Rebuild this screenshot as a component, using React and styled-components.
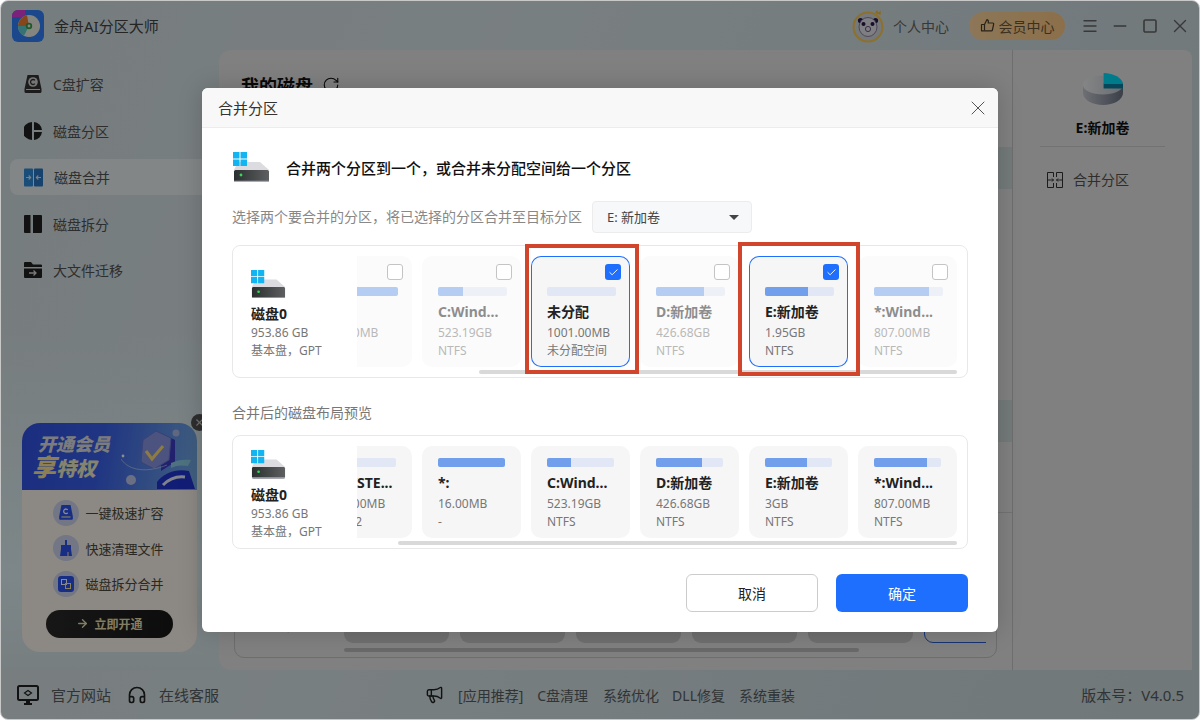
import React from 'react';
import styled, { createGlobalStyle } from 'styled-components';
import { X, Minus, Square, Menu, Megaphone, Headphones, RotateCw, Check, ArrowRight } from 'lucide-react';

const GlobalStyle = createGlobalStyle`
  html, body { margin: 0; padding: 0; background: #fff; overflow: hidden; }
  * { box-sizing: border-box; }
  body { font-family: "Noto Sans", "Noto Sans CJK SC", sans-serif; }
  svg { display: block; flex: none; }
`;

const Window = styled.div`
  position: relative;
  width: 1200px;
  height: 720px;
  display: flex;
  flex-direction: column;
  border-radius: 8px;
  overflow: hidden;
  border: 1px solid #c8c8c8;
  margin: 0;
  background: linear-gradient(110deg, #d8e3e7 0%, #dce8ec 35%, #ccdade 100%);
  color: #555;
`;
const TitleBar = styled.header`
  height: 49px;
  flex: none;
  display: flex;
  align-items: center;
  padding: 0 10px 0 11px;
`;
const AppName = styled.div`
  margin-left: 10px;
  font-size: 15px;
  color: #444;
`;
const TitleRight = styled.div`
  margin-left: auto;
  display: flex;
  align-items: center;
`;
const UserName = styled.span`
  font-size: 14px;
  margin: 0 20px 0 7px;
  color: #666;
`;
const VipPill = styled.div`
  width: 96px;
  height: 28px;
  border-radius: 14px;
  background: linear-gradient(90deg, #ffd9a0, #ffcb88);
  display: flex;
  align-items: center;
  justify-content: center;
  gap: 4px;
  font-size: 14px;
  color: #6e5a3c;
`;
const WinButtons = styled.div`
  display: flex;
  align-items: center;
  gap: 12px;
  margin-left: 16px;
  color: #666;
`;
const WinButton = styled.div`
  width: 18px;
  height: 18px;
  display: flex;
  align-items: center;
  justify-content: center;
`;
const Body = styled.div`
  flex: 1;
  display: flex;
  min-height: 0;
`;
const Sidebar = styled.aside`
  width: 218px;
  flex: none;
  display: flex;
  flex-direction: column;
  padding: 16px 0 18px 9px;
  background: linear-gradient(180deg, transparent 45%, #e3f5f8 85%, #d8e6ea 100%);
`;
const NavItem = styled.div`
  height: 36px;
  margin-bottom: 10.5px;
  border-radius: 8px 0 0 8px;
  display: flex;
  align-items: center;
  gap: 11px;
  padding-left: 14px;
  font-size: 14px;
  color: #555;
  background: ${p => (p.$active ? '#edf4f6' : 'transparent')};
`;
const Promo = styled.div`
  position: relative;
  margin: auto 0 0 12px;
  width: 175px;
  height: 229px;
`;
const PromoClose = styled.div`
  position: absolute;
  top: -9px;
  right: -11px;
  width: 17px;
  height: 17px;
  border-radius: 50%;
  background: #555;
  color: #ccc;
  display: flex;
  align-items: center;
  justify-content: center;
`;
const PromoCard = styled.div`
  height: 100%;
  border-radius: 18px;
  overflow: hidden;
  background: #fff8ee;
`;
const Banner = styled.div`
  height: 67px;
  display: flex;
  align-items: center;
  justify-content: space-between;
  padding: 0 2px 0 10px;
  background: linear-gradient(100deg, #3152e8 0%, #3a62ee 45%, #78b0e8 100%);
`;
const BannerText = styled.div`
  font-style: italic;
  font-weight: 900;
  line-height: 1;
  color: #e2e2e2;
  font-size: 18px;
  white-space: nowrap;
`;
const BannerLine = styled.div`
  padding-left: 6px;
  margin-bottom: 2px;
`;
const BannerSub = styled.div`
  font-size: 20px;
  color: #f2f0c8;
`;
const Gold = styled.span`
  font-size: 24px;
  color: #ffe89a;
`;
const PromoList = styled.div`
  padding-top: 5px;
  display: flex;
  flex-direction: column;
  align-items: center;
`;
const PromoRow = styled.div`
  height: 35.5px;
  width: 114px;
  display: flex;
  align-items: center;
  gap: 7px;
  font-size: 13px;
  white-space: nowrap;
  color: #4c4a3c;
`;
const PromoIcon = styled.div`
  width: 26px;
  height: 26px;
  flex: none;
  border-radius: 50%;
  background: #cfd8f2;
  display: flex;
  align-items: center;
  justify-content: center;
`;
const OpenButton = styled.div`
  margin-top: 8px;
  width: 127px;
  height: 28px;
  border-radius: 14px;
  background: linear-gradient(90deg, #2a2a2a, #181818);
  color: #f0e3b4;
  font-size: 12px;
  font-weight: 700;
  display: flex;
  align-items: center;
  justify-content: center;
  gap: 5px;
`;
const Panel = styled.main`
  flex: 1;
  margin-right: 7px;
  display: flex;
  border-radius: 12px 8px 0 12px;
  background: #e9e9e9;
  overflow: hidden;
`;
const PanelLeft = styled.section`
  width: 793px;
  flex: none;
  display: flex;
  flex-direction: column;
  padding-top: 18px;
`;
const Heading = styled.h2`
  height: 34px;
  margin: 0 0 45px;
  padding-left: 22px;
  display: flex;
  align-items: center;
  gap: 9px;
  font-size: 18px;
  font-weight: 700;
  color: #111;
`;
const TableRow = styled.div`
  height: 42.2px;
  background: ${p => (p.$active ? '#d2dedf' : 'transparent')};
`;
const DiskSection = styled.div`
  margin-top: auto;
  border-top: 1px solid #d0d0d0;
  padding: 12px 15px;
`;
const BackBox = styled.div`
  height: 133px;
  border: 1px solid #c6c6c6;
  border-radius: 10px;
  display: flex;
  padding: 10px 10px 5px 0;
`;
const BackInfo = styled.div`
  width: 109px;
  flex: none;
  padding: 82px 0 0 15px;
  font-size: 12px;
  line-height: 18px;
  color: #444;
`;
const BackCol = styled.div`
  flex: 1;
  min-width: 0;
`;
const BackStrip = styled.div`
  display: flex;
  gap: 11px;
  overflow: hidden;
`;
const BackCard = styled.div`
  width: 105px;
  height: 107px;
  flex: none;
  border-radius: 9px;
  background: ${p => (p.$selected ? 'transparent' : '#cacaca')};
  border: ${p => (p.$selected ? '1px solid #2a5fd0' : 'none')};
`;
const BackThumb = styled.div`
  width: 515px;
  height: 4px;
  margin-top: 5px;
  border-radius: 2px;
  background: #c0c0c0;
`;
const PanelRight = styled.section`
  flex: 1;
  border-left: 1px solid #c9c9c9;
  display: flex;
  flex-direction: column;
  align-items: center;
  padding-top: 23px;
`;
const RightName = styled.div`
  margin-top: 12px;
  font-size: 14px;
  font-weight: 700;
  line-height: 22px;
  color: #111;
`;
const RightDivider = styled.div`
  width: 125px;
  height: 1px;
  margin-top: 7px;
  background: #d0d0d0;
`;
const RightAction = styled.div`
  width: 125px;
  display: flex;
  align-items: center;
  gap: 10px;
  margin-top: 23px;
  padding-left: 7px;
  font-size: 14px;
  line-height: 20px;
  color: #555;
`;
const Footer = styled.footer`
  height: 49px;
  flex: none;
  display: flex;
  align-items: center;
  padding: 0 15px 0 16px;
  font-size: 14px;
  color: #5a6062;
`;
const FooterLink = styled.div`
  display: flex;
  align-items: center;
  gap: 12px;
  font-size: 15px;
  margin-right: ${p => p.$right || 0}px;
`;
const Promoted = styled.div`
  margin-left: 206px;
  display: flex;
  align-items: center;
`;
const PromotedText = styled.span`
  margin-left: ${p => p.$left}px;
  white-space: nowrap;
`;
const Version = styled.div`
  margin-left: auto;
  font-size: 15px;
`;

const Scrim = styled.div`
  position: absolute;
  inset: 0;
  z-index: 10;
  display: flex;
  align-items: center;
  justify-content: center;
  background: rgba(0, 0, 0, 0.45);
  margin: -1px;
`;
const Modal = styled.div`
  width: 796px;
  height: 544px;
  border-radius: 6px;
  background: #fff;
  overflow: hidden;
  box-shadow: 0 0 24px rgba(0, 0, 0, 0.18);
  color: #333;
`;
const ModalHeader = styled.div`
  height: 40px;
  padding: 0 8px 0 16px;
  display: flex;
  align-items: center;
  justify-content: space-between;
  background: #f8f8f8;
  border-bottom: 1px solid #ececec;
  font-size: 15px;
  color: #333;
`;
const ModalBody = styled.div`
  padding: 22px 30px 0;
`;
const Intro = styled.div`
  height: 34px;
  display: flex;
  align-items: center;
  padding-left: 1px;
`;
const IntroText = styled.div`
  margin: 1px 0 0 16px;
  font-size: 15px;
  font-weight: 500;
  color: #111;
`;
const HintRow = styled.div`
  margin-top: 17px;
  display: flex;
  align-items: center;
  gap: 10px;
  font-size: 14px;
  color: #888;
`;
const HintText = styled.span`
  margin-top: -2px;
`;
const Select = styled.div`
  width: 160px;
  height: 32px;
  padding: 0 12px 2px 14px;
  display: flex;
  align-items: center;
  justify-content: space-between;
  border: 1px solid #ececec;
  border-radius: 4px;
  background: #f7f8fa;
  font-size: 13px;
  color: #444;
`;
const Caret = styled.span`
  width: 0;
  height: 0;
  margin-top: 2px;
  border-left: 5px solid transparent;
  border-right: 5px solid transparent;
  border-top: 5px solid #444;
`;
const DiskBox = styled.div`
  position: relative;
  margin-top: ${p => p.$top}px;
  display: flex;
  padding: 10px 10px 3px 0;
  border: 1px solid #e8e8e8;
  border-radius: 8px;
  background: #fff;
`;
const DiskInfo = styled.div`
  width: 124px;
  flex: none;
  align-self: center;
  padding-left: 18px;
  font-size: 12px;
  line-height: 18px;
  color: #777;
`;
const DiskTitle = styled.div`
  margin-top: 6px;
  font-size: 14px;
  font-weight: 700;
  line-height: 20px;
  color: #222;
`;
const StripCol = styled.div`
  flex: 1;
  min-width: 0;
`;
const Strip = styled.div`
  overflow: hidden;
`;
const Track = styled.div`
  display: flex;
  gap: 10px;
  margin-left: -44px;
`;
const Card = styled.div`
  position: relative;
  width: 99px;
  height: ${p => p.$height}px;
  flex: none;
  padding: ${p => p.$top}px ${p => p.$right}px 0 16px;
  border-radius: 10px;
  background: ${p => (p.$dim ? '#fbfbfb' : '#f6f6f6')};
  box-shadow: ${p => (p.$selected ? 'inset 0 0 0 1px #1f6fff' : 'none')};
`;
const CardInner = styled.div`
  opacity: ${p => (p.$dim ? 0.5 : 1)};
`;
const Bar = styled.div`
  height: 9px;
  border-radius: 2px;
  background: #e1e7f5;
  overflow: hidden;
`;
const BarFill = styled.div`
  height: 100%;
  background: #729fec;
`;
const CardName = styled.div`
  margin: 6px 0 2px;
  font-size: 14px;
  font-weight: 700;
  line-height: 20px;
  white-space: nowrap;
  color: #222;
`;
const CardLine = styled.div`
  font-size: 12px;
  line-height: 18px;
  white-space: nowrap;
  color: #777;
`;
const Checkbox = styled.div`
  position: absolute;
  top: 8px;
  right: 9px;
  width: 16px;
  height: 16px;
  border-radius: 3px;
  display: flex;
  align-items: center;
  justify-content: center;
  background: ${p => (p.$checked ? '#1f6fff' : '#fff')};
  border: ${p => (p.$checked ? 'none' : '1px solid #c4c4c4')};
  color: #fff;
`;
const Thumb = styled.div`
  height: 4px;
  margin-top: 3px;
  border-radius: 2px;
  background: #d9d9d9;
`;
const SectionLabel = styled.div`
  margin-top: 25px;
  font-size: 14px;
  line-height: 20px;
  color: #777;
`;
const Annotation = styled.div`
  position: absolute;
  left: ${p => p.$left}px;
  top: ${p => p.$top}px;
  width: ${p => p.$width}px;
  height: ${p => p.$height}px;
  border: 4px solid #d1452d;
  pointer-events: none;
`;
const ModalFooter = styled.div`
  margin-top: 25px;
  display: flex;
  justify-content: flex-end;
  gap: 18px;
`;
const Button = styled.div`
  width: 132px;
  height: 38px;
  border-radius: 6px;
  display: flex;
  align-items: center;
  justify-content: center;
  font-size: 14px;
  background: ${p => (p.$primary ? '#1f6fff' : '#fff')};
  color: ${p => (p.$primary ? '#fff' : '#222')};
  border: ${p => (p.$primary ? 'none' : '1px solid #ccc')};
`;

const DriveIcon = ({ width = 37 }) => (
  <svg width={width} height={width * 30 / 37} viewBox="0 0 37 30">
    <defs>
      <linearGradient id="driveFront" x1="0" x2="1" y1="0" y2="0">
        <stop offset="0" stopColor="#2c2f30" />
        <stop offset="1" stopColor="#5d5f60" />
      </linearGradient>
    </defs>
    <path d="M5 10h22l9 8H1z" fill="#dcdce0" />
    <rect x="1" y="18" width="35" height="12" rx="1.5" fill="url(#driveFront)" />
    <path d="M1 28.8h35V30H1z" fill="#a9a9c0" />
    <circle cx="8" cy="23" r="1.4" fill="#35d858" />
    <path d="M0 0h6.5v6.5H0zM7.5 0H14v6.5H7.5zM0 7.5h6.5V14H0zM7.5 7.5H14V14H7.5z" fill="#12b4f2" />
  </svg>
);

const LogoIcon = () => (
  <svg width="32" height="32" viewBox="0 0 32 32">
    <rect width="32" height="32" rx="6" fill="#3283ff" />
    <circle cx="17" cy="16" r="11" fill="#f3f3ea" />
    <path d="M17 16H6a11 11 0 0 1 9-10.8z" fill="#f08030" />
    <path d="M17 16l-5 9.8A11 11 0 0 1 6 16z" fill="#60d0d4" />
    <circle cx="17" cy="16" r="3.2" fill="#3da04a" />
    <circle cx="17" cy="16" r="1.4" fill="#f3f3ea" />
    <path d="M0 6a6 6 0 0 1 6-6h7v3a4 4 0 0 1-4 4H0z" fill="#e040e0" />
  </svg>
);

const PandaAvatar = () => (
  <svg width="34" height="34" viewBox="0 0 34 34">
    <circle cx="16" cy="18" r="14.5" fill="#d6dde0" stroke="#ffcc50" strokeWidth="2" />
    <circle cx="8.5" cy="11.5" r="2.6" fill="#2a1a50" />
    <circle cx="23.5" cy="11.5" r="2.6" fill="#2a1a50" />
    <ellipse cx="16" cy="18" rx="9" ry="9.5" fill="#e6e6ee" stroke="#6a5a80" strokeWidth="0.7" />
    <circle cx="11.5" cy="15" r="2" fill="#2a1a50" />
    <circle cx="20.5" cy="15" r="2" fill="#2a1a50" />
    <circle cx="16" cy="20" r="2.6" fill="none" stroke="#6a5a80" />
    <path d="M23 4l2-3 1.5 2.5L29 1.5 28.5 6z" fill="#ffc040" />
  </svg>
);

const CrownIcon = () => (
  <svg width="15" height="15" viewBox="0 0 15 15" fill="none" stroke="#4e3f2a" strokeWidth="1.2">
    <path d="M1.5 6.5h3L7 1.5c1.4.3 1.6 1.6 1.2 3.5h4.6c.9 0 1 .8.8 1.5l-1.2 5.5c-.1.5-.4.8-1 .8H1.5z" strokeLinejoin="round" />
    <path d="M4.5 6.5v6" />
  </svg>
);

const CDiskIcon = () => (
  <svg width="18" height="18" viewBox="0 0 18 18">
    <path d="M3.5 0h11l3 14v2.5a1.5 1.5 0 0 1-1.500 1.500H2A1.500 1.500 0 0 1 .5 16.500V14z" fill="#333" />
    <circle cx="9" cy="7" r="4.800" fill="#d8d8d8" />
    <path d="M11 5.400a2.500 2.500 0 1 0 0 3.200" fill="none" stroke="#333" strokeWidth="1.300" />
    <path d="M2 14.500h14" stroke="#ddd" strokeWidth="1" />
  </svg>
);
const PieIcon = () => (
  <svg width="18" height="18" viewBox="0 0 18 18" fill="#222">
    <path d="M8 0v18A9 9 0 0 1 8 0z" />
    <path d="M10 0a9 9 0 0 1 8 8h-8z" />
    <path d="M10 10h8a9 9 0 0 1-8 8z" />
  </svg>
);
const MergeNavIcon = () => (
  <svg width="19" height="19" viewBox="0 0 19 19">
    <rect width="9" height="18" y="0.500" rx="1" fill="#2f8fe0" />
    <rect x="10" width="9" height="18" y="0.500" rx="1" fill="#2a78c8" />
    <path d="M2 9.500h4.500M4.700 7.500l2 2-2 2M17 9.500h-4.500M14.300 7.500l-2 2 2 2" stroke="#e8e8e8" strokeWidth="1.100" fill="none" />
  </svg>
);
const SplitNavIcon = () => (
  <svg width="18" height="18" viewBox="0 0 18 18" fill="#222">
    <path d="M1 0h5.500v18H1a1 1 0 0 1-1-1V1a1 1 0 0 1 1-1z" />
    <path d="M9 0h8a1 1 0 0 1 1 1v16a1 1 0 0 1-1 1H9z" />
  </svg>
);
const MoveNavIcon = () => (
  <svg width="18" height="18" viewBox="0 0 18 18" fill="#222">
    <path d="M1 1h6l2 2.500h8a1 1 0 0 1 1 1V6H0V2a1 1 0 0 1 1-1z" />
    <path d="M0 7.500h18V16a1 1 0 0 1-1 1H1a1 1 0 0 1-1-1z" />
    <path d="M5 12h7M9.500 9.500l2.500 2.500-2.500 2.500" stroke="#ddd" strokeWidth="1.300" fill="none" />
  </svg>
);

const MergeActionIcon = () => (
  <svg width="16" height="16" viewBox="0 0 16 16" fill="none" stroke="#333" strokeWidth="1">
    <path d="M6.500 5V.5h-6v15h6V11M9.500 5V.5h6v15h-6V11M.5 8h3M15.500 8h-3" />
    <path d="M3.500 8h3M5 6.500 6.500 8 5 9.500M12.500 8h-3M11 6.500 9.500 8l1.500 1.500" />
  </svg>
);

const PieChart = () => (
  <svg width="40" height="32" viewBox="0 0 40 32">
    <defs>
      <linearGradient id="pieSide" x1="0" x2="1" y1="0" y2="0">
        <stop offset="0" stopColor="#c8ccd4" />
        <stop offset="1" stopColor="#6c7484" />
      </linearGradient>
      <linearGradient id="pieTop" x1="0" x2="1" y1="0" y2="0">
        <stop offset="0" stopColor="#f2f2f4" />
        <stop offset="1" stopColor="#c0c6d0" />
      </linearGradient>
    </defs>
    <path d="M0 12v8a20 12 0 0 0 40 0v-8z" fill="url(#pieSide)" />
    <ellipse cx="20" cy="12" rx="20" ry="9.500" fill="url(#pieTop)" />
    <rect x="20.600" y="10.500" width="19.400" height="5" fill="#0a80a4" />
    <path d="M20.600 0A20 12 0 0 1 40 11H20.600z" fill="#00e0ff" />
  </svg>
);

const MonitorIcon = () => (
  <svg width="22" height="20" viewBox="0 0 22 20">
    <rect x="1" y="1" width="20" height="14" rx="1.500" fill="none" stroke="#222" strokeWidth="2" />
    <path d="M7 18h8v2H7zM9 15h4v3H9z" fill="#222" />
    <path d="M7.500 8 11 5.500 14.500 8 11 10.500z" fill="none" stroke="#222" strokeWidth="1.200" />
  </svg>
);

const BannerArt = () => (
  <svg width="74" height="64" viewBox="0 0 74 64">
    <circle cx="55" cy="8" r="3.500" fill="#b0bce8" />
    <circle cx="10" cy="55" r="5" fill="#c4caee" />
    <circle cx="2" cy="31" r="1.400" fill="#fff" />
    <path d="M40 8l14 7v22l-14 9z" fill="#3d3dc8" />
    <path d="M22 15 35 6l15 7-2 22-15 9-13-7z" fill="#8a98e8" stroke="#6a78d8" />
    <path d="M25 26l6 8 11-13" fill="none" stroke="#ffe078" strokeWidth="3" />
    <path d="M0 34c8 12 26 14 46 6" fill="none" stroke="#cfe0ff" strokeWidth="0.600" />
    <path d="M36 57c6-9 20-14 32-11l6 18H36z" fill="#2236d8" />
    <path d="M42 60c6-6 14-9 22-8" fill="none" stroke="#e8f0ff" strokeWidth="3" />
    <path d="M50 38c6-3 13-4 20-3l-3 6c-6-1-11-1-17 2z" fill="#8fd0e8" />
  </svg>
);

const PromoDisk = () => (
  <svg width="16" height="16" viewBox="0 0 14 14">
    <path d="M3 0h8l2 10v2a1 1 0 0 1-1 1H2a1 1 0 0 1-1-1V10z" fill="#2b55f0" />
    <path d="M3 10.500h8" stroke="#ffe9a0" />
    <path d="M8.500 4.200a2 2 0 1 0 0 2.600" fill="none" stroke="#fff" strokeWidth="1.100" />
  </svg>
);
const PromoBroom = () => (
  <svg width="14" height="16" viewBox="0 0 14 16">
    <path d="M6 0h2v5H6z" fill="#2b55f0" />
    <path d="M2 5h10v4l1 7H1l1-7z" fill="#2b55f0" />
    <path d="M9 12v4" stroke="#ffe9a0" />
  </svg>
);
const PromoSplit = () => (
  <svg width="16" height="16" viewBox="0 0 16 16">
    <rect width="16" height="16" rx="3" fill="#2b55f0" />
    <rect x="3.500" y="3.500" width="5" height="5" fill="none" stroke="#fff" />
    <rect x="7.500" y="7.500" width="5" height="5" fill="none" stroke="#ffe9a0" />
  </svg>
);

const selectCards = [
  { name: '*:', value: '16.00MB', fs: '-', fill: 100, dim: true },
  { name: 'C:Wind...', value: '523.19GB', fs: 'NTFS', fill: 36, dim: true },
  { name: '未分配', value: '1001.00MB', fs: '未分配空间', fill: 0, selected: true },
  { name: 'D:新加卷', value: '426.68GB', fs: 'NTFS', fill: 70, dim: true },
  { name: 'E:新加卷', value: '1.95GB', fs: 'NTFS', fill: 62, selected: true },
  { name: '*:Wind...', value: '807.00MB', fs: 'NTFS', fill: 80, dim: true },
];
const previewCards = [
  { name: '*:SYSTE...', value: '100.00MB', fs: 'FAT32', fill: 25 },
  { name: '*:', value: '16.00MB', fs: '-', fill: 100 },
  { name: 'C:Wind...', value: '523.19GB', fs: 'NTFS', fill: 36 },
  { name: 'D:新加卷', value: '426.68GB', fs: 'NTFS', fill: 69 },
  { name: 'E:新加卷', value: '3GB', fs: 'NTFS', fill: 63 },
  { name: '*:Wind...', value: '807.00MB', fs: 'NTFS', fill: 79 },
];

const nav = [
  { label: 'C盘扩容', icon: <CDiskIcon /> },
  { label: '磁盘分区', icon: <PieIcon /> },
  { label: '磁盘合并', icon: <MergeNavIcon />, active: true },
  { label: '磁盘拆分', icon: <SplitNavIcon /> },
  { label: '大文件迁移', icon: <MoveNavIcon /> },
];

const DiskSummary = () => (
  <DiskInfo>
    <DriveIcon width={35} />
    <DiskTitle>磁盘0</DiskTitle>
    <div>953.86 GB</div>
    <div>基本盘，GPT</div>
  </DiskInfo>
);

const PartitionCard = ({ card, height, top, right }) => (
  <Card $height={height} $top={top} $right={right} $dim={card.dim} $selected={card.selected}>
    <CardInner $dim={card.dim}>
      <Bar>
        <BarFill style={{ width: `${card.fill}%` }} />
      </Bar>
      <CardName>{card.name}</CardName>
      <CardLine>{card.value}</CardLine>
      <CardLine>{card.fs}</CardLine>
    </CardInner>
    {top > 20 && (
      <Checkbox $checked={card.selected}>
        {card.selected && <Check size={11} strokeWidth={2} />}
      </Checkbox>
    )}
  </Card>
);

export default function App() {
  return (
    <Window>
      <GlobalStyle />
      <TitleBar>
        <LogoIcon />
        <AppName>金舟AI分区大师</AppName>
        <TitleRight>
          <PandaAvatar />
          <UserName>个人中心</UserName>
          <VipPill>
            <CrownIcon />
            会员中心
          </VipPill>
          <WinButtons>
            <WinButton><Menu size={18} strokeWidth={1.8} /></WinButton>
            <WinButton><Minus size={20} strokeWidth={1.6} /></WinButton>
            <WinButton><Square size={16} strokeWidth={2.4} /></WinButton>
            <WinButton><X size={22} strokeWidth={1.5} /></WinButton>
          </WinButtons>
        </TitleRight>
      </TitleBar>
      <Body>
        <Sidebar>
          {nav.map(item => (
            <NavItem key={item.label} $active={item.active}>
              {item.icon}
              {item.label}
            </NavItem>
          ))}
          <Promo>
            <PromoCard>
              <Banner>
                <BannerText>
                  <BannerLine>开通会员</BannerLine>
                  <BannerSub><Gold>享</Gold>特权</BannerSub>
                </BannerText>
                <BannerArt />
              </Banner>
              <PromoList>
                <PromoRow><PromoIcon><PromoDisk /></PromoIcon>一键极速扩容</PromoRow>
                <PromoRow><PromoIcon><PromoBroom /></PromoIcon>快速清理文件</PromoRow>
                <PromoRow><PromoIcon><PromoSplit /></PromoIcon>磁盘拆分合并</PromoRow>
                <OpenButton><ArrowRight size={13} strokeWidth={2.5} />立即开通</OpenButton>
              </PromoList>
            </PromoCard>
            <PromoClose><X size={11} strokeWidth={2.5} /></PromoClose>
          </Promo>
        </Sidebar>
        <Panel>
          <PanelLeft>
            <Heading>我的磁盘 <RotateCw size={18} strokeWidth={1.5} /></Heading>
            {[0, 1, 2, 3, 4, 5, 6, 7].map(i => (
              <TableRow key={i} $active={i === 0 || i === 6} />
            ))}
            <DiskSection>
              <BackBox>
                <BackInfo>基本盘，GPT</BackInfo>
                <BackCol>
                  <BackStrip>
                    {[0, 1, 2, 3, 4].map(i => <BackCard key={i} />)}
                    <BackCard $selected />
                  </BackStrip>
                  <BackThumb />
                </BackCol>
              </BackBox>
            </DiskSection>
          </PanelLeft>
          <PanelRight>
            <PieChart />
            <RightName>E:新加卷</RightName>
            <RightDivider />
            <RightAction>
              <MergeActionIcon />
              合并分区
            </RightAction>
          </PanelRight>
        </Panel>
      </Body>
      <Footer>
        <FooterLink $right={16}><MonitorIcon />官方网站</FooterLink>
        <FooterLink><Headphones size={20} strokeWidth={2} color="#222" />在线客服</FooterLink>
        <Promoted>
          <Megaphone size={19} strokeWidth={1.8} color="#222" />
          <PromotedText $left={14}>[应用推荐]</PromotedText>
          <PromotedText $left={14}>C盘清理</PromotedText>
          <PromotedText $left={15}>系统优化</PromotedText>
          <PromotedText $left={13}>DLL修复</PromotedText>
          <PromotedText $left={14}>系统重装</PromotedText>
        </Promoted>
        <Version>版本号：V4.0.5</Version>
      </Footer>
      <Scrim>
        <Modal>
          <ModalHeader>
            合并分区
            <X size={24} strokeWidth={1} color="#555" />
          </ModalHeader>
          <ModalBody>
            <Intro>
              <DriveIcon />
              <IntroText>合并两个分区到一个，或合并未分配空间给一个分区</IntroText>
            </Intro>
            <HintRow>
              <HintText>选择两个要合并的分区，将已选择的分区合并至目标分区</HintText>
              <Select>E: 新加卷<Caret /></Select>
            </HintRow>
            <DiskBox $top={12}>
              <DiskSummary />
              <StripCol>
                <Strip>
                  <Track>
                    {selectCards.map(card => (
                      <PartitionCard key={card.name + card.value} card={card} height={111} top={31} right={14} />
                    ))}
                  </Track>
                </Strip>
                <Thumb style={{ marginLeft: 122 }} />
              </StripCol>
              <Annotation $left={292} $top={-2} $width={114} $height={130} />
              <Annotation $left={505} $top={-4} $width={122} $height={134} />
            </DiskBox>
            <SectionLabel>合并后的磁盘布局预览</SectionLabel>
            <DiskBox $top={12}>
              <DiskSummary />
              <StripCol>
                <Strip>
                  <Track>
                    {previewCards.map(card => (
                      <PartitionCard key={card.name + card.value} card={card} height={92} top={12} right={16} />
                    ))}
                  </Track>
                </Strip>
                <Thumb style={{ marginLeft: 41 }} />
              </StripCol>
            </DiskBox>
            <ModalFooter>
              <Button>取消</Button>
              <Button $primary>确定</Button>
            </ModalFooter>
          </ModalBody>
        </Modal>
      </Scrim>
    </Window>
  );
}
